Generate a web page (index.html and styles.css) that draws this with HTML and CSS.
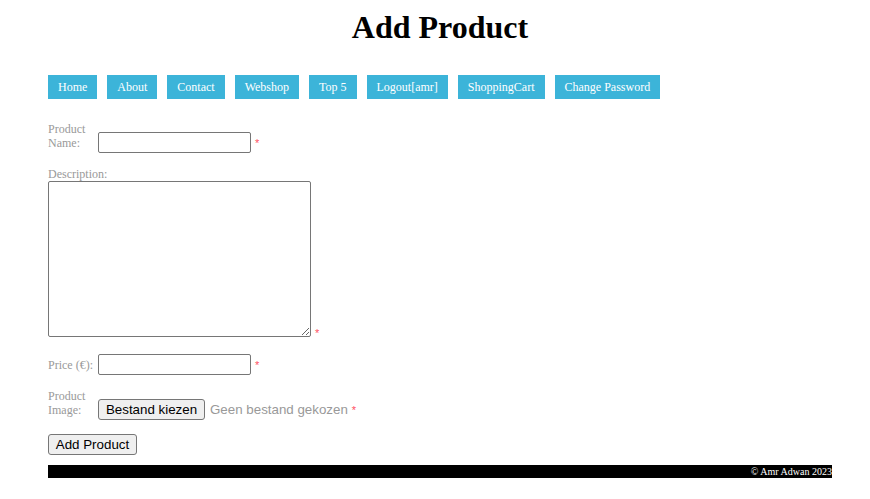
FILE: index.html
```html
<!DOCTYPE html>
<html>
<head>
<meta charset="utf-8">
<title>Add Product</title>
<link rel="stylesheet" href="styles.css">
</head>
<body>
<div class="page">
  <h1 class="title">Add Product</h1>
  <nav class="nav">
    <a class="nav-item" href="#">Home</a>
    <a class="nav-item" href="#">About</a>
    <a class="nav-item" href="#">Contact</a>
    <a class="nav-item" href="#">Webshop</a>
    <a class="nav-item" href="#">Top 5</a>
    <a class="nav-item" href="#">Logout[amr]</a>
    <a class="nav-item" href="#">ShoppingCart</a>
    <a class="nav-item" href="#">Change Password</a>
  </nav>
  <form class="form">
    <div class="row row-name"><label class="lbl">Product Name:</label><input class="txt" type="text"><span class="req">*</span></div>
    <div class="row row-desc"><label class="lbl-block">Description:</label><textarea class="area"></textarea><span class="req">*</span></div>
    <div class="row row-price"><label class="lbl">Price (€):</label><input class="txt" type="text"><span class="req">*</span></div>
    <div class="row row-image"><label class="lbl">Product Image:</label><button type="button" class="btn file-btn">Bestand kiezen</button><span class="file-none">Geen bestand gekozen</span><span class="req">*</span></div>
    <div class="row row-submit"><button type="button" class="btn submit-btn">Add Product</button></div>
  </form>
  <footer class="footer">© Amr Adwan 2023</footer>
</div>
</body>
</html>
```
FILE: styles.css
```css
html, body {
  margin: 0;
  padding: 0;
  background: #fff;
}
body {
  font-family: "Liberation Serif", "Times New Roman", serif;
  color: #000;
}
.page {
  width: 784px;
  margin-left: 48px;
}
.title {
  margin: 9px 0 0;
  font-size: 32px;
  line-height: 37px;
  font-weight: bold;
  text-align: center;
}
.nav {
  display: flex;
  gap: 10px;
  margin-top: 29px;
}
.nav-item {
  display: block;
  height: 24px;
  line-height: 24px;
  padding: 0 10px;
  background: #3cb4d9;
  color: #fff;
  font-size: 12px;
  text-decoration: none;
}
.form {
  margin-top: 23px;
}
.row {
  font-size: 12px;
  line-height: 14px;
  color: #999;
}
.lbl {
  display: inline-block;
  width: 50px;
  vertical-align: baseline;
}
.lbl-block {
  display: block;
}
.txt {
  box-sizing: border-box;
  width: 153px;
  height: 21px;
  border: 1px solid #767676;
  border-radius: 2px;
  padding: 1px 2px;
  font-family: "Liberation Sans", Arial, sans-serif;
  font-size: 13px;
  margin: 0;
  vertical-align: baseline;
}
.area {
  box-sizing: border-box;
  width: 263px;
  height: 156px;
  border: 1px solid #767676;
  border-radius: 2px;
  margin: 0;
  padding: 2px;
  vertical-align: baseline;
  font-family: "Liberation Mono", monospace;
  font-size: 13px;
}
.req {
  color: #ff5062;
  font-family: "Liberation Sans", Arial, sans-serif;
  font-size: 11px;
  margin-left: 4px;
}
.btn {
  box-sizing: border-box;
  height: 21px;
  padding: 1px 6px;
  margin: 0;
  border: 1px solid #767676;
  border-radius: 3px;
  background: #efefef;
  color: #000;
  font-family: "Liberation Sans", Arial, sans-serif;
  font-size: 13.33px;
  vertical-align: baseline;
}
.file-btn {
  width: 107px;
}
.submit-btn {
  width: 89px;
}
.file-none {
  font-family: "Liberation Sans", Arial, sans-serif;
  font-size: 13.33px;
  color: #999;
  margin-left: 5px;
}
.row-name {
  margin-bottom: 14px;
}
.row-desc {
  margin-bottom: 14px;
}
.row-price {
  margin-bottom: 14px;
}
.row-image {
  margin-bottom: 14px;
}
.row-submit {
  margin-bottom: 10px;
}
.footer {
  height: 13px;
  line-height: 13px;
  background: #000;
  color: #fff;
  font-size: 10px;
  text-align: right;
}
```
